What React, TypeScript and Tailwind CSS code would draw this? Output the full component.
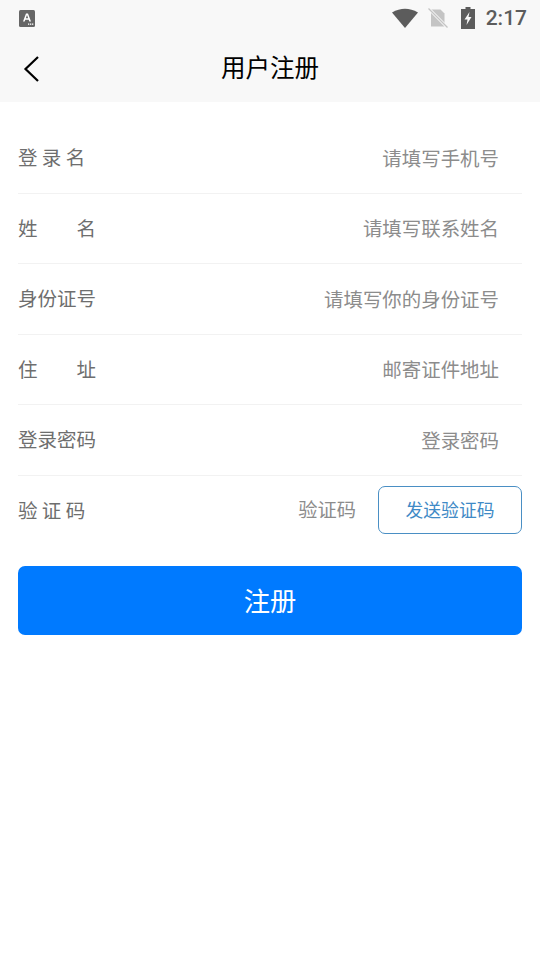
const CJK = "font-['Noto_Sans_CJK_SC','Noto_Sans',sans-serif]";

function Row({ label, placeholder }: { label: string[]; placeholder: string }) {
  return (
    <div className="flex h-[70.5px] items-center justify-between border-b border-[#f2f2f2] pb-[2px] pr-[23px]">
      {label.length === 2 ? (
        <span className="flex w-[78px] justify-between text-[19.5px] text-[#6e6e6e]">
          <span>{label[0]}</span>
          <span>{label[1]}</span>
        </span>
      ) : (
        <span className="whitespace-pre text-[19.5px] text-[#6e6e6e]">{label[0]}</span>
      )}
      <span className="mt-[1px] text-[19.45px] text-[#8c8c8c]">{placeholder}</span>
    </div>
  );
}

function StatusBar() {
  return (
    <div className="flex h-[36px] items-center justify-between pl-[19px] pr-[13px]">
      <svg width="16" height="17" viewBox="0 0 16 17">
        <rect x="0" y="0" width="16" height="17" rx="1.5" fill="#666666" />
        <path d="M4 11.5 L7 3.5 H9 L12 11.5 H10.3 L9.7 9.7 H6.3 L5.7 11.5 Z M6.8 8.2 H9.2 L8 5 Z" fill="#ffffff" fillRule="evenodd" />
        <rect x="9" y="13.5" width="1.3" height="1.3" fill="#ffffff" />
        <rect x="11" y="13.5" width="1.3" height="1.3" fill="#ffffff" />
        <rect x="13" y="13.5" width="1.3" height="1.3" fill="#ffffff" />
      </svg>
      <div className="flex items-center">
        <svg width="26" height="20" viewBox="0 0 26 20" className="mr-[10px]">
          <path d="M0 4.5 Q13 -3 26 4.5 L13 20 Z" fill="#5c5c5c" />
        </svg>
        <svg width="20" height="20" viewBox="0 0 20 20" className="mr-[13px]">
          <path d="M3 1.5 H12.5 L16.5 5.5 V18.5 H3 Z" fill="#c4c4c4" />
          <path d="M0.5 0.5 L19.5 19.5" stroke="#f8f8f8" strokeWidth="3" />
          <path d="M0.5 0.5 L19.5 19.5" stroke="#c4c4c4" strokeWidth="1.2" />
        </svg>
        <svg width="14" height="22" viewBox="0 0 14 22" className="mr-[11px]">
          <path d="M4.5 0 H9.5 V2 H14 V22 H0 V2 H4.5 Z" fill="#5c5c5c" />
          <path d="M8.5 5 L3.5 12.5 H6.5 L5.5 18 L10.5 10 H7.5 Z" fill="#f8f8f8" />
        </svg>
        <span className="font-['Roboto',sans-serif] text-[21px] font-medium leading-none text-[#5c5c5c]">2:17</span>
      </div>
    </div>
  );
}

export default function App() {
  return (
    <div className={`${CJK} h-[960px] w-[540px] bg-white`}>
      <div className="bg-[#f8f8f8]">
        <StatusBar />
        <div className="relative flex h-[66px] items-center justify-center pb-[3px]">
          <svg width="18" height="28" viewBox="0 0 18 28" className="absolute left-[22px] top-[19px]">
            <path d="M16 2 L3.5 14 L16 26" fill="none" stroke="#000000" strokeWidth="2.2" />
          </svg>
          <span className="text-[24.5px] text-black">用户注册</span>
        </div>
      </div>
      <div className="pl-[18px] pr-[18px] pt-[21px]">
        <Row label={["登 录 名"]} placeholder="请填写手机号" />
        <Row label={["姓", "名"]} placeholder="请填写联系姓名" />
        <Row label={["身份证号"]} placeholder="请填写你的身份证号" />
        <Row label={["住", "址"]} placeholder="邮寄证件地址" />
        <Row label={["登录密码"]} placeholder="登录密码" />
        <div className="flex h-[70px] items-center justify-between pb-[2px]">
          <span className="whitespace-pre text-[19.5px] text-[#6e6e6e]">验 证 码</span>
          <div className="flex items-center gap-[22px]">
            <span className="text-[19.25px] text-[#8c8c8c]">验证码</span>
            <button className="flex h-[48px] w-[144px] items-center justify-center rounded-[7px] border border-[#4a8fc4] text-[17.8px] text-[#3f8ac6]">
              发送验证码
            </button>
          </div>
        </div>
        <button className="mt-[20px] flex h-[69px] w-full items-center justify-center rounded-[7px] bg-[#007aff] pb-[1px] text-[26.3px] text-white">
          注册
        </button>
      </div>
    </div>
  );
}
